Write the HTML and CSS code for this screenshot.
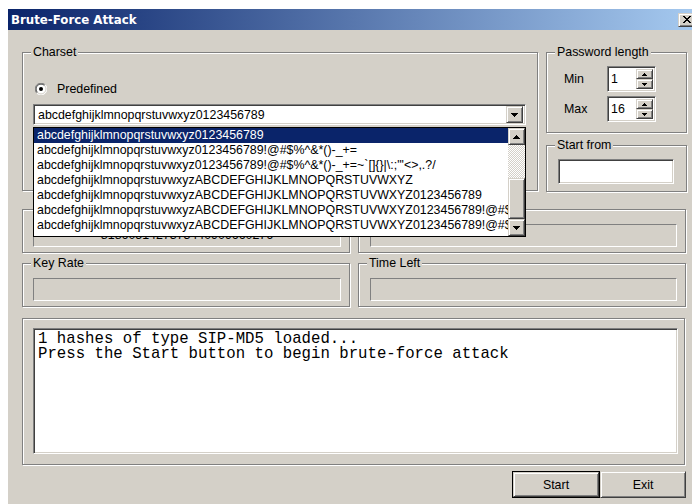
FILE: index.html
```html
<!DOCTYPE html>
<html lang="en">
<head>
<meta charset="utf-8">
<title>Brute-Force Attack</title>
<link rel="stylesheet" href="styles.css">
</head>
<body>
<div class="window">
  <div class="titlebar">
    <span class="title">Brute-Force Attack</span>
    <span class="close raised">
      <svg width="8" height="7" viewBox="0 0 8 7" shape-rendering="crispEdges"><path d="M0 0h2v1H0zM6 0h2v1H6zM1 1h2v1H1zM5 1h2v1H5zM2 2h4v1H2zM3 3h2v1H3zM2 4h4v1H2zM1 5h2v1H1zM5 5h2v1H5zM0 6h2v1H0zM6 6h2v1H6z" fill="#000"/></svg>
    </span>
  </div>

  <div class="client">
    <div class="row-top">
      <div class="group charset">
        <span class="legend">Charset</span>
        <label class="radio">
          <svg width="12" height="12" viewBox="0 0 12 12">
            <circle cx="6" cy="6" r="5.5" fill="#fff"/>
            <path d="M10.2 1.8A5.5 5.5 0 0 0 1.8 10.2" fill="none" stroke="#808080"/>
            <path d="M9.5 2.5A4.5 4.5 0 0 0 2.5 9.5" fill="none" stroke="#404040"/>
            <path d="M1.8 10.2A5.5 5.5 0 0 0 10.2 1.8" fill="none" stroke="#fff"/>
            <path d="M2.5 9.5A4.5 4.5 0 0 0 9.5 2.5" fill="none" stroke="#d4d0c8"/>
            <circle cx="6" cy="6" r="2" fill="#000"/>
          </svg>
          <span>Predefined</span>
        </label>
        <div class="combo sunken">
          <span class="combo-value">abcdefghijklmnopqrstuvwxyz0123456789</span>
          <span class="arrow-btn raised">
            <svg width="7" height="4" viewBox="0 0 7 4" shape-rendering="crispEdges"><path d="M0 0h7v1H0zM1 1h5v1H1zM2 2h3v1H2zM3 3h1v1H3z" fill="#000"/></svg>
          </span>
          <div class="droplist">
            <ul class="items">
              <li class="selected">abcdefghijklmnopqrstuvwxyz0123456789</li>
              <li>abcdefghijklmnopqrstuvwxyz0123456789!@#$%^&amp;*()-_+=</li>
              <li>abcdefghijklmnopqrstuvwxyz0123456789!@#$%^&amp;*()-_+=~`[]{}|\:;"'&lt;&gt;,.?/</li>
              <li>abcdefghijklmnopqrstuvwxyzABCDEFGHIJKLMNOPQRSTUVWXYZ</li>
              <li>abcdefghijklmnopqrstuvwxyzABCDEFGHIJKLMNOPQRSTUVWXYZ0123456789</li>
              <li>abcdefghijklmnopqrstuvwxyzABCDEFGHIJKLMNOPQRSTUVWXYZ0123456789!@#$%^&amp;*()-_+=</li>
              <li>abcdefghijklmnopqrstuvwxyzABCDEFGHIJKLMNOPQRSTUVWXYZ0123456789!@#$%^&amp;*()-_+=~`[]{}|\:;"'&lt;&gt;,.?/</li>
            </ul>
            <div class="vscroll">
              <span class="arrow-btn raised">
                <svg width="7" height="4" viewBox="0 0 7 4" shape-rendering="crispEdges"><path d="M3 0h1v1H3zM2 1h3v1H2zM1 2h5v1H1zM0 3h7v1H0z" fill="#000"/></svg>
              </span>
              <span class="track"></span>
              <span class="thumb raised"></span>
              <span class="arrow-btn raised">
                <svg width="7" height="4" viewBox="0 0 7 4" shape-rendering="crispEdges"><path d="M0 0h7v1H0zM1 1h5v1H1zM2 2h3v1H2zM3 3h1v1H3z" fill="#000"/></svg>
              </span>
            </div>
          </div>
        </div>
      </div>

      <div class="side">
        <div class="group pwlen">
          <span class="legend">Password length</span>
          <div class="spin-row">
            <span class="spin-label">Min</span>
            <div class="spin sunken">
              <span class="spin-value">1</span>
              <div class="spin-btns">
                <span class="spin-btn raised"><svg width="5" height="3" viewBox="0 0 5 3" shape-rendering="crispEdges"><path d="M2 0h1v1H2zM1 1h3v1H1zM0 2h5v1H0z" fill="#000"/></svg></span>
                <span class="spin-btn raised"><svg width="5" height="3" viewBox="0 0 5 3" shape-rendering="crispEdges"><path d="M0 0h5v1H0zM1 1h3v1H1zM2 2h1v1H2z" fill="#000"/></svg></span>
              </div>
            </div>
          </div>
          <div class="spin-row">
            <span class="spin-label">Max</span>
            <div class="spin sunken">
              <span class="spin-value">16</span>
              <div class="spin-btns">
                <span class="spin-btn raised"><svg width="5" height="3" viewBox="0 0 5 3" shape-rendering="crispEdges"><path d="M2 0h1v1H2zM1 1h3v1H1zM0 2h5v1H0z" fill="#000"/></svg></span>
                <span class="spin-btn raised"><svg width="5" height="3" viewBox="0 0 5 3" shape-rendering="crispEdges"><path d="M0 0h5v1H0zM1 1h3v1H1zM2 2h1v1H2z" fill="#000"/></svg></span>
              </div>
            </div>
          </div>
        </div>
        <div class="group startfrom">
          <span class="legend">Start from</span>
          <div class="edit sunken"></div>
        </div>
      </div>
    </div>

    <!-- keyspace / current password row, mostly under the open list -->
    <div class="row-pair row-info">
      <div class="group half">
        <div class="readout">8186051427373440909660276</div>
      </div>
      <div class="group half right">
        <div class="readout"></div>
      </div>
    </div>

    <div class="row-pair row-rate">
      <div class="group half">
        <span class="legend">Key Rate</span>
        <div class="readout"></div>
      </div>
      <div class="group half right">
        <span class="legend">Time Left</span>
        <div class="readout"></div>
      </div>
    </div>

    <div class="group log">
      <div class="logbox sunken">1 hashes of type SIP-MD5 loaded...
Press the Start button to begin brute-force attack</div>
    </div>

    <div class="buttons">
      <span class="btn default"><span class="btn-face raised">Start</span></span>
      <span class="btn raised">Exit</span>
    </div>
  </div>
</div>
</body>
</html>
```

FILE: styles.css
```css
* {
  box-sizing: border-box;
}

html,
body {
  margin: 0;
  overflow: hidden;
  background: #fff;
}

body {
  padding: 9px 0 0 8px;
  font-family: "Liberation Sans", Arial, sans-serif;
  font-size: 12.4px;
  color: #000;
}

/* classic 3D edges */
.raised {
  background: #d4d0c8;
  border: 1px solid;
  border-color: #d4d0c8 #404040 #404040 #d4d0c8;
  box-shadow: inset 1px 1px #fff, inset -1px -1px #808080;
}

.sunken {
  background: #fff;
  border: 1px solid;
  border-color: #808080 #fff #fff #808080;
  box-shadow: inset 1px 1px #404040, inset -1px -1px #d4d0c8;
}

.window {
  width: 690px;
  height: 500px;
  background: #d4d0c8;
}

.titlebar {
  height: 21px;
  display: flex;
  align-items: center;
  justify-content: space-between;
  padding-left: 3px;
  background: linear-gradient(to right, #0a246a, #a6caf0);
}

.title {
  color: #fff;
  font-family: "DejaVu Sans", sans-serif;
  font-weight: bold;
  font-size: 11.8px;
}

.close {
  width: 17px;
  height: 14px;
  margin-right: 3px;
  display: flex;
  align-items: center;
  justify-content: center;
}

.client {
  padding: 22px 0 0 14px;
}

/* etched group frame */
.group {
  position: relative;
  border: 1px solid #808080;
  box-shadow: inset 1px 1px #fff, 1px 1px #fff;
}

.legend {
  position: absolute;
  top: -8px;
  left: 8px;
  padding: 0 2px;
  line-height: 14px;
  background: #d4d0c8;
  white-space: nowrap;
}

.row-top {
  display: flex;
  gap: 8px;
}

.charset {
  width: 516px;
  height: 139px;
}

.radio {
  display: flex;
  align-items: center;
  height: 12px;
  margin: 30px 0 0 12px;
}

.radio span {
  margin-left: 10px;
}

.combo {
  position: relative;
  display: flex;
  align-items: center;
  width: 493px;
  height: 21px;
  margin: 9px 0 0 10px;
  padding: 2px;
}

.combo-value {
  flex: 1;
  padding-left: 2px;
  white-space: nowrap;
}

.arrow-btn {
  display: flex;
  align-items: center;
  justify-content: center;
  width: 17px;
  height: 17px;
  flex: none;
}

/* open drop-down list of the combo box */
.droplist {
  position: absolute;
  z-index: 10;
  top: calc(100% + 3px);
  left: -1px;
  width: 493px;
  height: 110px;
  display: flex;
  background: #fff;
  border: 1px solid #000;
}

.items {
  flex: 1;
  margin: 0;
  padding: 0;
  list-style: none;
  overflow: hidden;
}

.items li {
  height: 15px;
  line-height: 15px;
  padding-left: 3px;
  white-space: nowrap;
  overflow: hidden;
}

.items .selected {
  background: #0a246a;
  color: #fff;
}

.vscroll {
  width: 17px;
  display: flex;
  flex-direction: column;
}

.track {
  height: 33px;
  background-image: repeating-conic-gradient(#fff 0 25%, #d4d0c8 0 50%);
  background-size: 2px 2px;
}

.thumb {
  flex: 1;
}

.side {
  width: 141px;
  display: flex;
  flex-direction: column;
  gap: 12px;
}

.pwlen {
  height: 81px;
  padding: 13px 0 0 17px;
  display: flex;
  flex-direction: column;
  gap: 4px;
}

.spin-row {
  display: flex;
  align-items: center;
  height: 26px;
}

.spin-label {
  width: 43px;
}

.spin {
  display: flex;
  width: 49px;
  height: 26px;
  padding: 2px;
}

.spin-value {
  flex: 1;
  padding-left: 1px;
  line-height: 20px;
}

.spin-btns {
  width: 17px;
  display: flex;
  flex-direction: column;
}

.spin-btn {
  flex: 1;
  display: flex;
  align-items: center;
  justify-content: center;
}

.startfrom {
  height: 47px;
  padding: 13px 0 0 11px;
}

.edit {
  width: 116px;
  height: 25px;
}

.row-pair {
  display: flex;
  gap: 8px;
}

.row-info {
  margin-top: 17px;
}

.row-rate {
  margin-top: 10px;
}

.half {
  width: 328px;
  height: 44px;
  padding: 14px 0 0 10px;
}

.half.right {
  padding-left: 11px;
}

.readout {
  width: 308px;
  height: 23px;
  border: 1px solid;
  border-color: #808080 #fff #fff #808080;
  text-align: center;
  line-height: 20px;
  white-space: nowrap;
  overflow: hidden;
}

.right .readout {
  width: 307px;
}

.log {
  width: 663px;
  height: 147px;
  margin-top: 11px;
  padding: 9px 0 0 10px;
}

.logbox {
  width: 645px;
  height: 126px;
  padding: 3px 4px;
  font-family: "Liberation Mono", "Courier New", monospace;
  font-size: 15.7px;
  line-height: 15px;
  white-space: pre;
  overflow: hidden;
}

.buttons {
  width: 664px;
  margin-top: 6px;
  display: flex;
  justify-content: flex-end;
}

.btn {
  display: flex;
  align-items: center;
  justify-content: center;
  height: 27px;
  width: 86px;
}

.btn.default {
  width: 88px;
  border: 1px solid #000;
}

.btn-face {
  width: 100%;
  height: 100%;
  display: flex;
  align-items: center;
  justify-content: center;
}
```
